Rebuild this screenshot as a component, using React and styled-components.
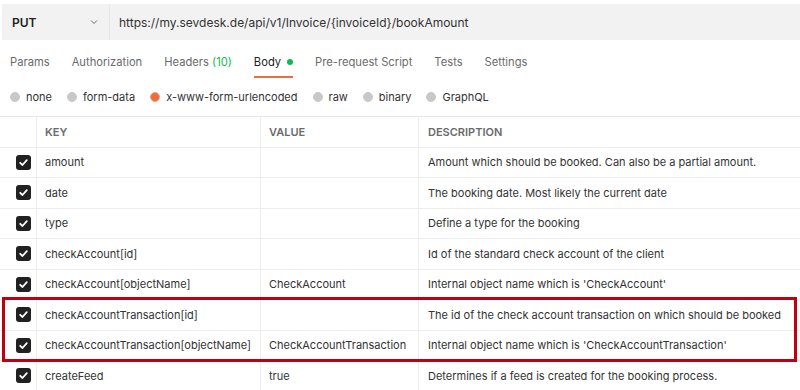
import styled, { createGlobalStyle } from "styled-components";

const GlobalStyle = createGlobalStyle`
  body {
    margin: 0;
    background: #fff;
    font-family: Inter, "Noto Sans", sans-serif;
    color: #212121;
  }
`;

const Page = styled.div`
  width: 800px;
  height: 390px;
  overflow: hidden;
`;

const UrlBar = styled.div`
  display: flex;
  align-items: center;
  height: 36px;
  margin: 4px 0 0 2px;
  background: #f2f2f2;
  font-size: 12px;
`;

const Method = styled.div`
  display: flex;
  align-items: center;
  justify-content: space-between;
  width: 108px;
  height: 100%;
  box-sizing: border-box;
  padding: 0 10px 0 10px;
  border-right: 1px solid #e8e8e8;
  font-weight: 600;
`;

const Url = styled.div`
  padding-left: 9px;
  color: #333;
`;

const Tabs = styled.div`
  display: flex;
  align-items: flex-start;
  gap: 22px;
  height: 40px;
  padding-left: 10px;
  font-size: 11.2px;
`;

const Tab = styled.div`
  display: flex;
  align-items: center;
  gap: 6px;
  height: 38px;
  box-sizing: border-box;
  padding-top: 8px;
  color: ${(p) => (p.$active ? "#212121" : "#6b6b6b")};
  border-bottom: 2px solid ${(p) => (p.$active ? "#f26b3a" : "transparent")};
`;

const Count = styled.span`
  color: #0cbb52;
`;

const Dot = styled.span`
  width: 6px;
  height: 6px;
  border-radius: 50%;
  background: #0cbb52;
`;

const Radios = styled.div`
  display: flex;
  align-items: center;
  gap: 15px;
  height: 36px;
  box-sizing: border-box;
  padding: 0 0 2px 10px;
  font-size: 11px;
`;

const RadioOption = styled.label`
  display: flex;
  align-items: center;
  gap: 6px;
  color: #333;
`;

const RadioMark = styled.span`
  width: 10px;
  height: 10px;
  border-radius: 50%;
  box-sizing: border-box;
  background: ${(p) => (p.$checked ? "#f26b3a" : "#c8c8c8")};
  border: 1px solid ${(p) => (p.$checked ? "#e0a58f" : "#c8c8c8")};
`;

const Table = styled.div`
  border-top: 1px solid #e6e6e6;
  font-size: 11px;
`;

const Row = styled.div`
  display: grid;
  grid-template-columns: 36px 224px 158px 1fr;
  height: 30.5px;
  box-sizing: border-box;
  border-bottom: 1px solid #ededed;
`;

const Cell = styled.div`
  display: flex;
  align-items: center;
  padding-left: ${(p) => (p.$desc ? "9px" : "8px")};
  border-left: 1px solid #ededed;
  white-space: nowrap;
  overflow: hidden;
  color: #333;
`;

const HeadCell = styled(Cell)`
  font-weight: 600;
  color: #6b6b6b;
`;

const CheckCell = styled.div`
  display: flex;
  align-items: center;
  justify-content: flex-end;
  padding-right: 5px;
`;

const Checkbox = styled.span`
  display: flex;
  align-items: center;
  justify-content: center;
  width: 15px;
  height: 15px;
  border-radius: 3px;
  background: #212121;
`;

const Highlight = styled.div`
  position: relative;
  &::after {
    content: "";
    position: absolute;
    left: 2px;
    right: 3px;
    top: -3px;
    bottom: -1px;
    border: 3px solid #c00010;
    pointer-events: none;
  }
`;

const Chevron = () => (
  <svg width="10" height="10" viewBox="0 0 10 10">
    <path d="M2 3.5 L5 6.5 L8 3.5" fill="none" stroke="#6b6b6b" strokeWidth="1" />
  </svg>
);

const Check = () => (
  <svg width="11" height="11" viewBox="0 0 11 11">
    <path d="M2.2 5.8 L4.5 8 L8.8 3.2" fill="none" stroke="#fff" strokeWidth="1.8" strokeLinecap="round" strokeLinejoin="round" />
  </svg>
);

const rows = [
  ["amount", "", "Amount which should be booked. Can also be a partial amount."],
  ["date", "", "The booking date. Most likely the current date"],
  ["type", "", "Define a type for the booking"],
  ["checkAccount[id]", "", "Id of the standard check account of the client"],
  ["checkAccount[objectName]", "CheckAccount", "Internal object name which is 'CheckAccount'"],
];

const highlighted = [
  ["checkAccountTransaction[id]", "", "The id of the check account transaction on which should be booked"],
  ["checkAccountTransaction[objectName]", "CheckAccountTransaction", "Internal object name which is 'CheckAccountTransaction'"],
];

const tail = [["createFeed", "true", "Determines if a feed is created for the booking process."]];

const ParamRow = ({ row }) => (
  <Row>
    <CheckCell>
      <Checkbox>
        <Check />
      </Checkbox>
    </CheckCell>
    <Cell>{row[0]}</Cell>
    <Cell>{row[1]}</Cell>
    <Cell $desc>{row[2]}</Cell>
  </Row>
);

const radios = ["none", "form-data", "x-www-form-urlencoded", "raw", "binary", "GraphQL"];

export default function App() {
  return (
    <Page>
      <GlobalStyle />
      <UrlBar>
        <Method>
          PUT
          <Chevron />
        </Method>
        <Url>https://my.sevdesk.de/api/v1/Invoice/{"{invoiceId}"}/bookAmount</Url>
      </UrlBar>
      <Tabs>
        <Tab>Params</Tab>
        <Tab>Authorization</Tab>
        <Tab>
          <span>
            Headers <Count>(10)</Count>
          </span>
        </Tab>
        <Tab $active>
          Body <Dot />
        </Tab>
        <Tab>Pre-request Script</Tab>
        <Tab>Tests</Tab>
        <Tab>Settings</Tab>
      </Tabs>
      <Radios>
        {radios.map((r) => (
          <RadioOption key={r}>
            <RadioMark $checked={r === "x-www-form-urlencoded"} />
            {r}
          </RadioOption>
        ))}
      </Radios>
      <Table>
        <Row>
          <CheckCell />
          <HeadCell>KEY</HeadCell>
          <HeadCell>VALUE</HeadCell>
          <HeadCell $desc>DESCRIPTION</HeadCell>
        </Row>
        {rows.map((r) => (
          <ParamRow key={r[0]} row={r} />
        ))}
        <Highlight>
          {highlighted.map((r) => (
            <ParamRow key={r[0]} row={r} />
          ))}
        </Highlight>
        {tail.map((r) => (
          <ParamRow key={r[0]} row={r} />
        ))}
      </Table>
    </Page>
  );
}
